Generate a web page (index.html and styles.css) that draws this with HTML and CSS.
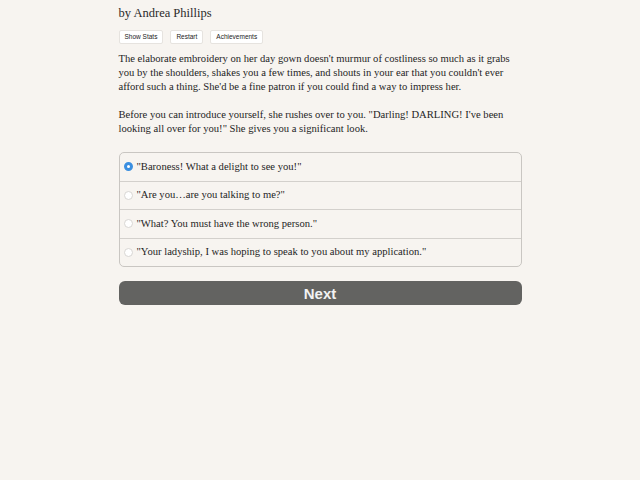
FILE: index.html
```html
<!DOCTYPE html>
<html>
<head>
    <title>The Baroness</title>
    <link rel="stylesheet" href="styles.css">
</head>
<body>

    <div class="container">
        <div class="byline">by Andrea Phillips</div>

        <div class="buttons">
            <button class="small">Show Stats</button>
            <button class="small">Restart</button>
            <button class="small">Achievements</button>
        </div>

        <p>The elaborate embroidery on her day gown doesn't murmur of costliness so much as it grabs you by the shoulders, shakes you a few times, and shouts in your ear that you couldn't ever afford such a thing. She'd be a fine patron if you could find a way to impress her.</p>
        <p>Before you can introduce yourself, she rushes over to you. "Darling! DARLING! I've been looking all over for you!" She gives you a significant look.</p>

        <form class="choices">
            <label class="choice">
                <input type="radio" name="choice" value="0" checked>
                <span>"Baroness! What a delight to see you!"</span>
            </label>
            <label class="choice">
                <input type="radio" name="choice" value="1">
                <span>"Are you…are you talking to me?"</span>
            </label>
            <label class="choice">
                <input type="radio" name="choice" value="2">
                <span>"What? You must have the wrong person."</span>
            </label>
            <label class="choice">
                <input type="radio" name="choice" value="3">
                <span>"Your ladyship, I was hoping to speak to you about my application."</span>
            </label>
        </form>

        <button class="next">Next</button>
    </div>

</body>
</html>
```

FILE: styles.css
```css
body {
    font-family: "Liberation Serif", serif;
    background-color: #f7f4f0;
    color: #1e1e1e;
    margin: 0;
    padding: 0;
}

.container {
    width: 403px;
    margin: 0 auto;
    padding-top: 5px;
    font-size: 10.6px;
    line-height: 14px;
}

.byline {
    font-size: 12.5px;
    line-height: 16px;
    color: #2a2a2a;
}

.buttons {
    display: flex;
    gap: 7px;
    margin-top: 9px;
}

button.small {
    font-family: "Liberation Sans", Arial, sans-serif;
    font-size: 6.5px;
    line-height: 8px;
    padding: 2px 5px;
    background-color: #ffffff;
    color: #222222;
    border: 1px solid #e6e3df;
    border-radius: 2px;
}

p {
    margin: 8px 0 14px 0;
}

p + p {
    margin-top: 0;
}

.choices {
    margin-top: 16px;
    border: 1px solid #c9c6c2;
    border-radius: 5px;
}

.choice {
    display: flex;
    align-items: center;
    gap: 4px;
    height: 27.5px;
    padding-left: 3px;
    border-top: 1px solid #d3d0cc;
}

.choice:first-child {
    border-top: none;
}

.choice input {
    margin: 0 0 0 1px;
    width: 9px;
    height: 9px;
    appearance: none;
    border: 1px solid #d8d6d3;
    border-radius: 50%;
    background-color: #ffffff;
}

.choice input:checked {
    border: 3px solid #3b8fe0;
    background-color: #ffffff;
}

.next {
    display: block;
    width: 100%;
    height: 24px;
    margin-top: 14px;
    font-family: "Liberation Sans", Arial, sans-serif;
    font-weight: bold;
    font-size: 15px;
    color: #f2f2f2;
    background-color: #636361;
    border: none;
    border-radius: 6px;
}
```
